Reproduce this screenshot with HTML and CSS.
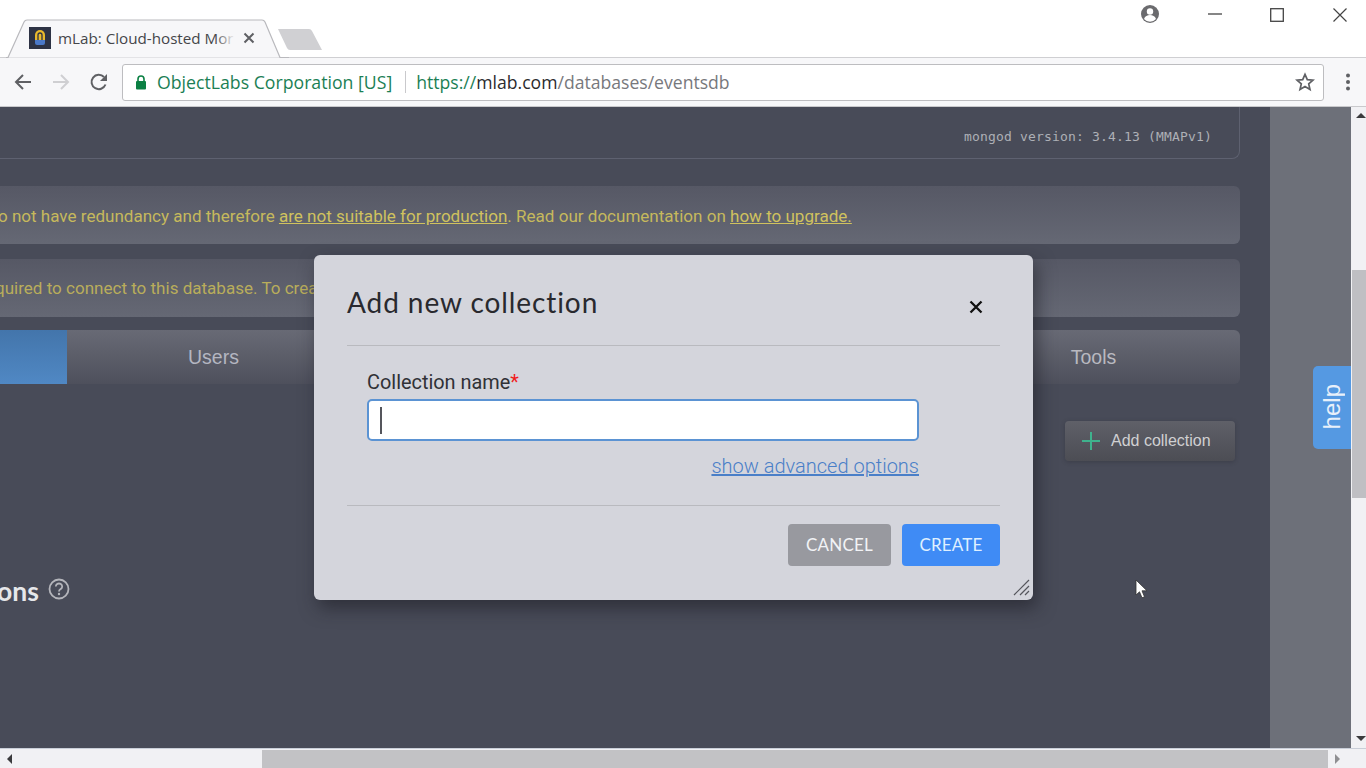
FILE: index.html
```html
<!DOCTYPE html>
<html lang="en">
<head>
<meta charset="utf-8">
<title>mLab: Cloud-hosted MongoDB</title>
<link rel="stylesheet" href="styles.css">
</head>
<body>
<div class="screen">
  <header class="chrome">
    <div class="tabstrip">
      <div class="tab">
        <svg class="tab-shape" width="290" height="39" viewBox="0 0 290 39"><path d="M6 38.5H8L24 3Q25 1 27 1H262Q264 1 265 3L280 38.5H289" fill="#f7f7f9" stroke="#b9b9bd" stroke-width="1.2"/></svg>
        <svg class="favicon" width="22" height="22" viewBox="0 0 22 22"><rect width="22" height="22" fill="#2d3244"/><path d="M6 13V8a5 5 0 0 1 10 0v5z" fill="#e9b92c"/><path d="M6 13h10v3a2 2 0 0 1-2 2H8a2 2 0 0 1-2-2z" fill="#4a78c8"/><path d="M9 13V8a2 2 0 0 1 4 0v5" fill="none" stroke="#2d3244" stroke-width="1.3"/></svg>
        <span class="tab-title">mLab: Cloud-hosted Mor</span>
        <span class="tab-fade"></span>
        <svg class="tab-close" width="12" height="12" viewBox="0 0 12 12"><path d="M1.500 1.500l9 9M10.500 1.500l-9 9" stroke="#5f6064" stroke-width="2"/></svg>
      </div>
      <svg class="newtab" width="46" height="23" viewBox="0 0 46 23"><path d="M1 1H32Q34 1 35 3L45 22H13Q11 22 10 20z" fill="#d0d0d3"/></svg>
      <div class="winctl">
        <svg class="profile" width="20" height="20" viewBox="0 0 20 20"><circle cx="10" cy="10" r="9" fill="#6b6b6e"/><circle cx="10" cy="7.500" r="3.200" fill="#fff"/><path d="M4 15c1-3 3.500-4 6-4s5 1 6 4a8 8 0 0 1-12 0z" fill="#fff"/></svg>
        <svg width="14" height="14" viewBox="0 0 14 14" class="wc wc-min"><path d="M0 7h14" stroke="#444" stroke-width="1.300"/></svg>
        <svg width="14" height="14" viewBox="0 0 14 14" class="wc wc-max"><rect x=".7" y=".7" width="12.600" height="12.600" fill="none" stroke="#444" stroke-width="1.300"/></svg>
        <svg width="14" height="14" viewBox="0 0 14 14" class="wc wc-close"><path d="M.5.5l13 13M13.500.5l-13 13" stroke="#444" stroke-width="1.200"/></svg>
      </div>
    </div>
    <div class="toolbar">
      <svg class="tb-icon" width="20" height="20" viewBox="0 0 20 20"><path d="M18 10H3M10 3l-7 7 7 7" fill="none" stroke="#5f6064" stroke-width="2"/></svg>
      <svg class="tb-icon tb-fwd" width="20" height="20" viewBox="0 0 20 20"><path d="M2 10h15M10 3l7 7-7 7" fill="none" stroke="#cfcfd2" stroke-width="2"/></svg>
      <svg class="tb-icon tb-reload" width="20" height="20" viewBox="0 0 20 20"><path d="M16.500 12.500A7.200 7.200 0 1 1 15 5" fill="none" stroke="#5f6064" stroke-width="2"/><path d="M18 2v7h-7z" fill="#5f6064"/></svg>
      <div class="omnibox">
        <svg class="lock" width="12" height="15" viewBox="0 0 12 15"><path d="M3 6V4a3 3 0 0 1 6 0v2" fill="none" stroke="#0b8043" stroke-width="1.600"/><rect x="1" y="6" width="10" height="8.500" rx="1" fill="#0b8043"/></svg>
        <span class="org">ObjectLabs Corporation [US]</span>
        <span class="omni-sep"></span>
        <span class="url"><span class="url-scheme">https://</span><span class="url-host">mlab.com</span><span class="url-path">/databases/eventsdb</span></span>
        <svg class="star" width="20" height="20" viewBox="0 0 20 20"><path d="M10 2.300l2.300 5.300 5.700.5-4.300 3.800 1.300 5.600-5-3-5 3 1.300-5.600L2 8.100l5.700-.5z" fill="none" stroke="#5f6064" stroke-width="1.700"/></svg>
      </div>
      <svg class="kebab" width="6" height="18" viewBox="0 0 6 18"><circle cx="3" cy="2.500" r="2" fill="#5f6064"/><circle cx="3" cy="9" r="2" fill="#5f6064"/><circle cx="3" cy="15.500" r="2" fill="#5f6064"/></svg>
    </div>
  </header>

  <div class="viewport">
    <main class="page">
      <div class="infobox"><span class="version">mongod version: 3.4.13 (MMAPv1)</span></div>
      <div class="alert"><p class="alert-text">o not have redundancy and therefore <a class="alert-link">are not suitable for production</a>. Read our documentation on <a class="alert-link">how to upgrade.</a></p></div>
      <div class="alert alert-second"><p class="alert-text">quired to connect to this database. To crea</p></div>
      <nav class="tabs">
        <div class="pagetab pagetab-active"></div>
        <div class="pagetab pagetab-users">Users</div>
        <div class="pagetab pagetab-hidden"></div>
        <div class="pagetab pagetab-hidden"></div>
        <div class="pagetab pagetab-tools">Tools</div>
      </nav>
      <div class="actions">
        <button class="add-btn"><svg width="18" height="18" viewBox="0 0 18 18"><path d="M9 0v18M0 9h18" stroke="#3fb28d" stroke-width="2"/></svg>Add collection</button>
      </div>
      <h2 class="section-title">ons
        <svg class="help-q" width="22" height="22" viewBox="0 0 22 22"><circle cx="11" cy="11" r="9.500" fill="none" stroke="#b4b5bb" stroke-width="1.800"/><path d="M7.800 8.500a3.200 3 0 1 1 4.800 2.600c-1 .6-1.600 1.200-1.600 2.400" fill="none" stroke="#b4b5bb" stroke-width="1.800"/><circle cx="11" cy="16" r="1.200" fill="#b4b5bb"/></svg>
      </h2>
    </main>
    <aside class="side"><div class="help-tab"><span class="help-text">help</span></div></aside>
    <div class="vscroll">
      <span class="arrow-up"></span>
      <div class="vthumb"></div>
      <span class="arrow-down"></span>
    </div>
  </div>
  <div class="hscroll">
    <span class="arrow-left"></span>
    <div class="hthumb"></div>
    <span class="arrow-right"></span>
  </div>

  <section class="modal">
    <div class="modal-head">
      <h1 class="modal-title">Add new collection</h1>
      <svg class="modal-close" width="14" height="14" viewBox="0 0 14 14"><path d="M1.500 1.500l11 11M12.500 1.500l-11 11" stroke="#111" stroke-width="2.300"/></svg>
    </div>
    <div class="modal-body">
      <label class="field-label">Collection name<span class="req">*</span></label>
      <div class="input"><span class="caret"></span></div>
      <div class="adv"><a class="adv-link">show advanced options</a></div>
    </div>
    <div class="modal-foot">
      <button class="btn btn-cancel">CANCEL</button>
      <button class="btn btn-create">CREATE</button>
    </div>
    <svg class="resize" width="18" height="18" viewBox="0 0 18 18"><path d="M1 16L16 1M7 16l9-9M12 16l4-4" stroke="#55565c" stroke-width="1.200"/></svg>
  </section>

  <svg class="cursor" width="13" height="20" viewBox="0 0 13 20"><path d="M1 1v15l3.500-3.200 2.500 6 2.500-1-2.500-6H12z" fill="#fff" stroke="#333" stroke-width=".8"/></svg>
</div>
</body>
</html>
```
FILE: styles.css
```css
* { box-sizing: border-box; }
html, body { margin: 0; padding: 0; }
body { font-family: Roboto, sans-serif; background: #fff; }
.screen { position: relative; width: 1366px; height: 768px; overflow: hidden; display: flex; flex-direction: column; }

/* Browser chrome */
.chrome { height: 107px; flex: none; display: flex; flex-direction: column; background: #fff; border-bottom: 1px solid #c9c9cc; }
.tabstrip { height: 58px; flex: none; position: relative; display: flex; align-items: flex-start; border-bottom: 1px solid #cfcfd2; }
.tab { position: relative; width: 270px; height: 37px; margin: 20px 0 0 7px; display: flex; align-items: center; padding: 0 0 2px 22px; flex: none; }
.tab-shape { position: absolute; left: -7px; top: -1px; }
.favicon { position: relative; flex: none; }
.tab-title { position: relative; margin-left: 7px; font: 15.200px "Open Sans", sans-serif; color: #45464a; white-space: nowrap; width: 176px; }
.tab-fade { position: absolute; left: 208px; top: 8px; width: 20px; height: 22px; background: linear-gradient(90deg, rgba(247,247,249,0), #f7f7f9); }
.tab-close { position: relative; margin-left: 9px; flex: none; }
.newtab { margin: 28px 0 0 0; flex: none; }
.winctl { position: absolute; right: 0; top: 0; display: flex; align-items: center; height: 28px; }
.profile { margin-right: 48px; }
.wc { margin-right: 19px; }
.wc-min { margin-right: 48px; }
.wc-max { margin-right: 49px; margin-top: 2px; }
.wc-close { margin-top: 2px; }
.toolbar { flex: 1; background: #f7f7f9; display: flex; align-items: center; padding: 0 0 0 13px; }
.tb-icon { flex: none; }
.tb-fwd { margin-left: 18px; }
.tb-reload { margin-left: 18px; }
.omnibox { width: 1202px; height: 37px; margin-left: 13px; background: #fff; border: 1px solid #bdbdc0; border-radius: 3px; display: flex; align-items: center; padding: 0 8px 0 12px; font: 18px "Open Sans", sans-serif; white-space: nowrap; flex: none; }
.lock { flex: none; }
.org { color: #1c7f55; margin-left: 10px; font-size: 17.700px; }
.omni-sep { width: 1px; height: 22px; background: #c9c9cc; margin: 0 10px 0 13px; flex: none; }
.url { font-size: 17.600px; }
.url-scheme { color: #1c7f55; }
.url-host { color: #2b2b2e; }
.url-path { color: #77787c; }
.star { margin-left: auto; flex: none; }
.kebab { margin-left: 21px; flex: none; }

/* Page */
.viewport { flex: 1; display: flex; min-height: 0; }
.page { width: 1270px; flex: none; background: #484b58; padding-right: 30px; display: flex; flex-direction: column; overflow: hidden; }
.infobox { height: 52px; flex: none; border: 1px solid #5e6170; border-width: 0 1px 1px 0; border-bottom-right-radius: 8px; display: flex; align-items: center; justify-content: flex-end; padding: 8px 27px 0 0; }
.version { font: 13px "DejaVu Sans Mono", monospace; letter-spacing: .17px; color: #aeb0b6; }
.alert { height: 58px; flex: none; margin-top: 27px; background: linear-gradient(#565865, #656874); border-radius: 0 6px 6px 0; display: flex; align-items: center; font-size: 17.050px; color: #c6b95c; white-space: nowrap; padding-top: 2px; overflow: hidden; }
.alert-text { margin: 0 0 0 -2px; }
.alert-second { margin-top: 15px; padding-top: 0; color: #b9ad5b; }
.alert-second .alert-text { margin-left: -5px; }
.alert-link { color: #d0c25e; text-decoration: underline; }
.tabs { height: 54px; flex: none; margin-top: 13px; display: grid; grid-template-columns: 67px 293px 293px 294px 293px; border-radius: 0 6px 6px 0; overflow: hidden; background: linear-gradient(#686a75, #4e505c); }
.pagetab { display: flex; align-items: center; justify-content: center; font: 19.500px "Liberation Sans", sans-serif; color: #b4b6c1; }
.pagetab-active { background: linear-gradient(#4375ab, #5088c4); }
.pagetab-tools { color: #b9b9c0; }
.actions { display: flex; justify-content: flex-end; padding-right: 5px; margin-top: 37px; flex: none; }
.add-btn { width: 170px; height: 40px; border: 0; border-radius: 4px; background: linear-gradient(#5f6068, #4c4d54); display: flex; align-items: center; padding: 0 0 0 17px; font: 16px "Liberation Sans", sans-serif; color: #d0d0d2; gap: 11px; box-shadow: 0 1px 4px rgba(40,42,50,.4); }
.section-title { margin: 112px 0 0 -3px; font: 700 26.500px Lato, sans-serif; color: #e6e7ea; display: flex; align-items: center; gap: 9px; line-height: 36px; }
.help-q { margin-top: -4px; }
.side { width: 81px; flex: none; background: #6d7079; position: relative; padding-top: 259px; display: flex; justify-content: flex-end; }
.help-tab { width: 38px; height: 83px; background: #5599e2; border-radius: 5px 0 0 5px; display: flex; align-items: center; justify-content: center; }
.help-text { writing-mode: vertical-rl; transform: rotate(180deg); font: 24px "Liberation Sans", sans-serif; color: #e8f0fa; margin-top: -2px; }
.vscroll { width: 15px; flex: none; background: #f1f1f4; position: relative; display: flex; flex-direction: column; align-items: center; padding-top: 163px; }
.vthumb { width: 14px; height: 228px; margin-left: 1px; background: #bfbfc3; }
.arrow-up, .arrow-down, .arrow-left, .arrow-right { position: absolute; width: 0; height: 0; border: 5px solid transparent; }
.arrow-up { top: 6px; left: 5px; border-top: 0; border-bottom-color: #3b3b3d; }
.arrow-down { bottom: 7px; left: 5px; border-bottom: 0; border-top-color: #3b3b3d; }
.hscroll { height: 20px; flex: none; position: relative; background: #f1f1f4; border-top: 1px solid #c9ced8; padding: 1px 38px 0 262px; }
.hthumb { height: 100%; background: #c2c2c5; }
.arrow-left { left: 7px; top: 5px; border-left: 0; border-right-color: #3b3b3d; }
.arrow-right { right: 26px; top: 5px; border-right: 0; border-left-color: #8f8f92; }

/* Modal */
.modal { position: absolute; left: 314px; top: 255px; width: 719px; height: 345px; background: #d4d5dc; border-radius: 6px; padding: 0 33px; box-shadow: 4px 8px 18px rgba(25,26,32,.55); display: flex; flex-direction: column; }
.modal-head { height: 91px; flex: none; border-bottom: 1px solid #b9babf; display: flex; align-items: center; justify-content: space-between; padding: 0 17px 0 0; }
.modal-title { margin: 3px 0 0; font: 400 28px Lato, sans-serif; letter-spacing: .92px; color: #29292e; }
.modal-close { margin-top: 13px; }
.modal-body { height: 160px; flex: none; padding: 25px 0 0 20px; border-bottom: 1px solid #b9babf; display: flex; flex-direction: column; width: 100%; }
.field-label { font-size: 19.900px; line-height: 24px; color: #303136; }
.req { color: #f01d1d; }
.input { width: 552px; height: 42px; margin-top: 4px; background: #fff; border: 2px solid #5b93d3; border-radius: 5px; display: flex; align-items: center; padding-left: 11px; flex: none; }
.caret { width: 2px; height: 27px; background: #55565c; }
.adv { width: 552px; text-align: right; margin-top: 13px; }
.adv-link { font-size: 20px; font-weight: 300; line-height: 24px; color: #4a7fc8; text-decoration: underline; }
.modal-foot { display: flex; justify-content: flex-end; gap: 11px; padding-top: 18px; }
.btn { height: 42px; border: 0; border-radius: 4px; font: 17px Lato, sans-serif; letter-spacing: .2px; color: #f2f3f6; padding: 0 0 2px; }
.btn-cancel { width: 103px; background: #98999f; }
.btn-create { width: 98px; background: #3f8bf5; color: #dff0ff; }
.resize { position: absolute; right: 2px; bottom: 3px; }
.cursor { position: absolute; left: 1135px; top: 579px; }
```
